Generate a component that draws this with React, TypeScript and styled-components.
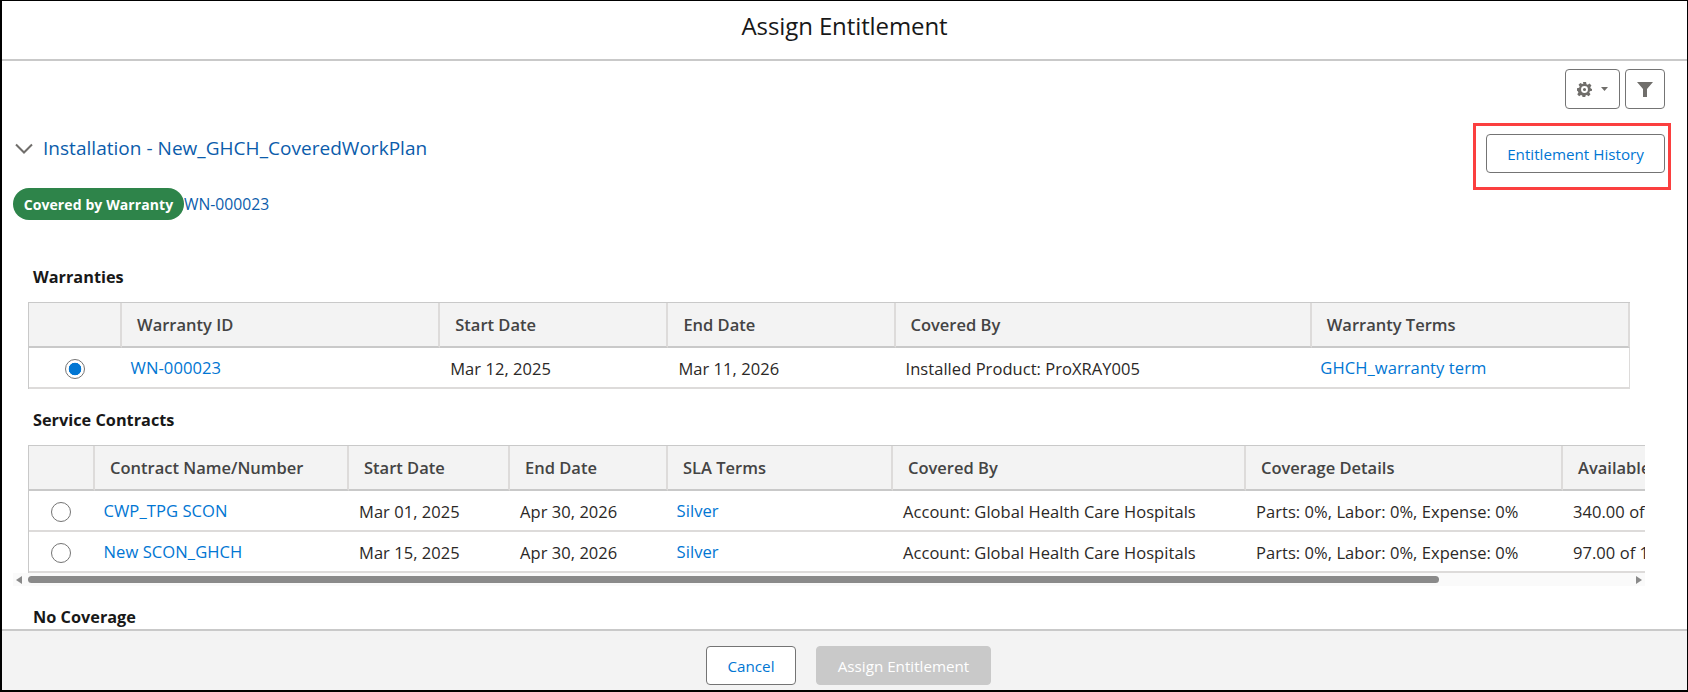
import styled, { createGlobalStyle } from 'styled-components'

const Global = createGlobalStyle`
  html, body { margin: 0; padding: 0; background: #fff; }
  body { font-family: "Open Sans", "Noto Sans", sans-serif; color: #2b2826; }
`

const Frame = styled.div`
  width: 1688px;
  height: 692px;
  box-sizing: border-box;
  border: 1px solid #000;
  border-width: 1px 1px 2px 2px;
  display: flex;
  flex-direction: column;
  overflow: hidden;
`

const Header = styled.header`
  height: 60px;
  flex: none;
  box-sizing: border-box;
  border-bottom: 2px solid #c9c9c9;
  display: flex;
  align-items: center;
  justify-content: center;
  padding-bottom: 10px;
  font-size: 24px;
  letter-spacing: -0.1px;
  color: #181818;
`

const Body = styled.main`
  flex: 1;
  min-height: 0;
  overflow: hidden;
`

const Toolbar = styled.div`
  display: flex;
  justify-content: flex-end;
  gap: 5px;
  padding: 8px 22px 0 0;
`

const IconButton = styled.button<{ $w: number }>`
  width: ${p => p.$w}px;
  height: 40px;
  box-sizing: border-box;
  border: 1px solid #747474;
  border-radius: 4px;
  background: #fff;
  padding: 0;
  display: flex;
  align-items: center;
  justify-content: center;
  gap: 9px;
`

const Summary = styled.div`
  display: flex;
  justify-content: space-between;
  align-items: flex-start;
  padding: 14px 22px 0 11px;
  height: 143px;
  box-sizing: border-box;
`

const SummaryLeft = styled.div`
  display: flex;
  flex-direction: column;
  align-items: flex-start;
`

const PlanRow = styled.div`
  display: flex;
  align-items: center;
  gap: 10px;
  height: 38px;
  margin-top: 6px;
  padding-left: 2px;
`

const PlanTitle = styled.a`
  font-size: 19px;
  letter-spacing: 0.03px;
  color: #0b5cab;
`

const CoverageRow = styled.div`
  display: flex;
  align-items: center;
  margin-top: 21px;
`

const Pill = styled.span`
  height: 32px;
  width: 171px;
  border-radius: 16px;
  background: #2e844a;
  color: #fff;
  font-size: 14px;
  font-weight: 700;
  letter-spacing: 0.1px;
  display: flex;
  align-items: center;
  justify-content: center;
`

const PillLink = styled.a`
  font-size: 15.7px;
  color: #0b5cab;
`

const HighlightBox = styled.div`
  border: 3px solid #fb3f3f;
  margin-right: -6px;
  padding: 8px 3px 14px 10px;
`

const HistoryButton = styled.button`
  display: block;
  width: 179px;
  height: 39px;
  box-sizing: border-box;
  border: 1px solid #747474;
  border-radius: 4px;
  background: #fff;
  color: #0176d3;
  font: inherit;
  font-size: 15.2px;
`

const Sections = styled.div`
  padding: 0 0 0 26px;
`

const SectionTitle = styled.h3<{ $h: number; $top?: number }>`
  margin: ${p => p.$top ?? 0}px 0 0;
  height: ${p => p.$h}px;
  padding-left: 5px;
  display: flex;
  align-items: center;
  font-size: 16.3px;
  font-weight: 700;
  color: #181818;
`

const TableClip = styled.div<{ $w: number }>`
  width: ${p => p.$w}px;
  overflow: hidden;
`

const Table = styled.table<{ $w: number }>`
  width: ${p => p.$w}px;
  table-layout: fixed;
  border-collapse: separate;
  border-spacing: 0;
  border-left: 1px solid #c9c9c9;
  border-top: 1px solid #c9c9c9;
`

const Th = styled.th`
  height: 43px;
  padding: 0 0 0 15px;
  background: #f3f3f3;
  border-bottom: 2px solid #c9c9c9;
  border-right: 2px solid #dddbda;
  text-align: left;
  font-size: 16.5px;
  font-weight: 600;
  color: #444;
  white-space: nowrap;
  overflow: hidden;
`

const Td = styled.td`
  height: 37px;
  padding: 2px 0 0 10px;
  border-bottom: 2px solid #dddbda;
  font-size: 16.5px;
  letter-spacing: 0.05px;
  white-space: nowrap;
  overflow: hidden;
  color: #2b2826;
`

const EndTd = styled(Td)`
  border-right: 1px solid #dddbda;
`

const RadioCell = styled.td`
  height: 39px;
  padding: 0 2px 0 0;
  border-bottom: 2px solid #dddbda;
  text-align: center;
`

const Radio = styled.span<{ $on?: boolean }>`
  display: inline-block;
  vertical-align: middle;
  box-sizing: border-box;
  width: 20px;
  height: 20px;
  border-radius: 50%;
  border: 1px solid #747474;
  background: ${p => (p.$on ? 'radial-gradient(circle, #0176d3 0 6px, #fff 6.6px)' : '#fff')};
`

const CellLink = styled.a`
  color: #0176d3;
  font-size: 16.6px;
  margin-left: -1.5px;
  position: relative;
  top: -1px;
`

const ScrollTrack = styled.div`
  width: 1632px;
  height: 13px;
  margin-left: -15px;
  background: #fafafa;
  display: flex;
  align-items: center;
  justify-content: space-between;
  padding: 0 3px;
  box-sizing: border-box;
`

const ScrollThumb = styled.div`
  width: 1411px;
  height: 7px;
  border-radius: 4px;
  background: #8a8a8a;
  margin: 0 auto 0 6px;
`

const Arrow = styled.span<{ $right?: boolean }>`
  width: 0;
  height: 0;
  border-top: 4px solid transparent;
  border-bottom: 4px solid transparent;
  ${p => (p.$right ? 'border-left: 6px solid #8a8a8a;' : 'border-right: 6px solid #8a8a8a;')}
`

const Footer = styled.footer`
  flex: none;
  height: 61px;
  box-sizing: border-box;
  border-top: 2px solid #c9c9c9;
  background: #f3f3f3;
  display: flex;
  justify-content: center;
  gap: 20px;
  padding: 15px 0 0 8px;
`

const FooterButton = styled.button<{ $primary?: boolean }>`
  width: ${p => (p.$primary ? 175 : 90)}px;
  height: 39px;
  box-sizing: border-box;
  border-radius: 4px;
  border: 1px solid ${p => (p.$primary ? '#c9c9c9' : '#747474')};
  background: ${p => (p.$primary ? '#c9c9c9' : '#fff')};
  color: ${p => (p.$primary ? '#fff' : '#0176d3')};
  font: inherit;
  font-size: 15.2px;
`

function GearIcon() {
  return (
    <svg width="15" height="15" viewBox="0 0 24 24" fill="#706e6b">
      <path
        fillRule="evenodd"
        d="M9.5 0h5l.7 3.4 2 .9 2.9-1.9 3 3-1.9 2.9.9 2L24 11v3l-3.4.7-.9 2 1.9 2.9-3 3-2.9-1.9-2 .9-.7 3.4h-4l-.7-3.4-2-.9-2.9 1.9-3-3 1.9-2.9-.9-2L0 14v-4l3.4-.7.9-2-1.9-2.9 3-3 2.9 1.9 2-.9L9.5 0zM12 6.5a5.5 5.5 0 1 0 0 11 5.5 5.5 0 0 0 0-11zm0 3a2.5 2.5 0 1 1 0 5 2.5 2.5 0 0 1 0-5z"
      />
    </svg>
  )
}

function CaretIcon() {
  return (
    <svg width="7" height="4" viewBox="0 0 7 4" fill="#706e6b">
      <path d="M0 0h7L3.5 4z" />
    </svg>
  )
}

function FilterIcon() {
  return (
    <svg width="16" height="15" viewBox="0 0 16 15" fill="#706e6b">
      <path d="M0 0h16l-6 7v8H6V7z" />
    </svg>
  )
}

function ChevronIcon() {
  return (
    <svg width="18" height="11" viewBox="0 0 18 11" fill="none" stroke="#706e6b" strokeWidth="2">
      <path d="M1 1.5l8 8 8-8" />
    </svg>
  )
}

const warrantyCols = [93, 318, 228, 227, 416, 318]
const contractCols = [66, 254, 161, 158, 225, 353, 317, 200]
const contractRows = [
  ['CWP_TPG SCON', 'Mar 01, 2025', 'Apr 30, 2026', '340.00 of 500.00'],
  ['New SCON_GHCH', 'Mar 15, 2025', 'Apr 30, 2026', '97.00 of 100.00'],
]

export default function App() {
  return (
    <Frame>
      <Global />
      <Header>Assign Entitlement</Header>
      <Body>
        <Toolbar>
          <IconButton $w={55}>
            <GearIcon />
            <CaretIcon />
          </IconButton>
          <IconButton $w={40}>
            <FilterIcon />
          </IconButton>
        </Toolbar>
        <Summary>
          <SummaryLeft>
            <PlanRow>
              <ChevronIcon />
              <PlanTitle>Installation - New_GHCH_CoveredWorkPlan</PlanTitle>
            </PlanRow>
            <CoverageRow>
              <Pill>Covered by Warranty</Pill>
              <PillLink>WN-000023</PillLink>
            </CoverageRow>
          </SummaryLeft>
          <HighlightBox>
            <HistoryButton>Entitlement History</HistoryButton>
          </HighlightBox>
        </Summary>
        <Sections>
          <SectionTitle $h={50}>Warranties</SectionTitle>
          <TableClip $w={1602}>
            <Table $w={1602}>
              <colgroup>
                {warrantyCols.map((w, i) => (
                  <col key={i} style={{ width: w }} />
                ))}
              </colgroup>
              <thead>
                <tr>
                  <Th />
                  <Th>Warranty ID</Th>
                  <Th>Start Date</Th>
                  <Th>End Date</Th>
                  <Th>Covered By</Th>
                  <Th>Warranty Terms</Th>
                </tr>
              </thead>
              <tbody>
                <tr>
                  <RadioCell>
                    <Radio $on />
                  </RadioCell>
                  <Td>
                    <CellLink>WN-000023</CellLink>
                  </Td>
                  <Td>Mar 12, 2025</Td>
                  <Td>Mar 11, 2026</Td>
                  <Td>Installed Product: ProXRAY005</Td>
                  <EndTd>
                    <CellLink>GHCH_warranty term</CellLink>
                  </EndTd>
                </tr>
              </tbody>
            </Table>
          </TableClip>
          <SectionTitle $h={50} $top={6}>
            Service Contracts
          </SectionTitle>
          <TableClip $w={1617}>
            <Table $w={1734}>
              <colgroup>
                {contractCols.map((w, i) => (
                  <col key={i} style={{ width: w }} />
                ))}
              </colgroup>
              <thead>
                <tr>
                  <Th />
                  <Th>Contract Name/Number</Th>
                  <Th>Start Date</Th>
                  <Th>End Date</Th>
                  <Th>SLA Terms</Th>
                  <Th>Covered By</Th>
                  <Th>Coverage Details</Th>
                  <Th>Available Balance</Th>
                </tr>
              </thead>
              <tbody>
                {contractRows.map(row => (
                  <tr key={row[0]}>
                    <RadioCell>
                      <Radio />
                    </RadioCell>
                    <Td>
                      <CellLink>{row[0]}</CellLink>
                    </Td>
                    <Td>{row[1]}</Td>
                    <Td>{row[2]}</Td>
                    <Td>
                      <CellLink>Silver</CellLink>
                    </Td>
                    <Td>Account: Global Health Care Hospitals</Td>
                    <Td>Parts: 0%, Labor: 0%, Expense: 0%</Td>
                    <Td>{row[3]}</Td>
                  </tr>
                ))}
              </tbody>
            </Table>
          </TableClip>
          <ScrollTrack>
            <Arrow />
            <ScrollThumb />
            <Arrow $right />
          </ScrollTrack>
          <SectionTitle $h={62}>No Coverage</SectionTitle>
        </Sections>
      </Body>
      <Footer>
        <FooterButton>Cancel</FooterButton>
        <FooterButton $primary>Assign Entitlement</FooterButton>
      </Footer>
    </Frame>
  )
}
